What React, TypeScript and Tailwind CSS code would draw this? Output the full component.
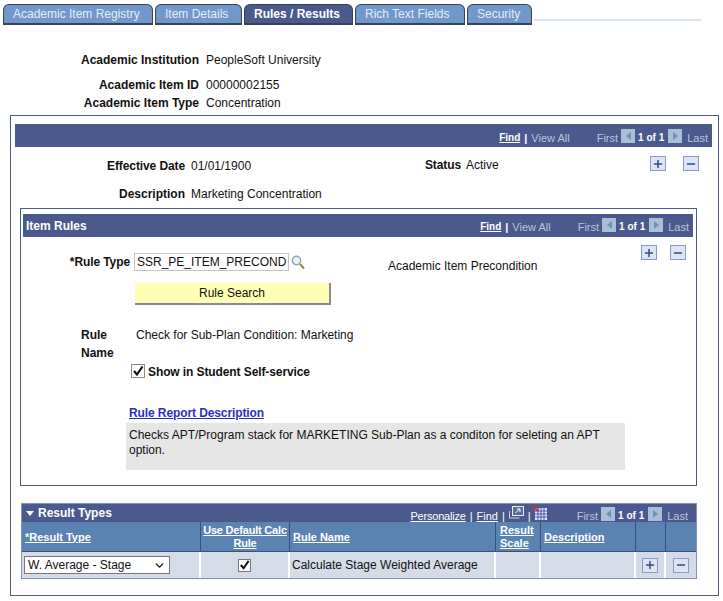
import { ChevronDown, Minus, Plus } from 'lucide-react';

const tabs = [
  { label: 'Academic Item Registry', width: 'w-[150px]' },
  { label: 'Item Details', width: 'w-[87px]' },
  { label: 'Rules / Results', width: 'w-[109px]', active: true },
  { label: 'Rich Text Fields', width: 'w-[110px]' },
  { label: 'Security', width: 'w-[65px]' },
];

const IconBtn = ({ minus }: { minus?: boolean }) => (
  <span className="flex h-[15px] w-[16px] items-center justify-center border border-[#8c9bc4] bg-[#dbe5f5] text-[#2f4a86]">
    {minus ? <Minus size={12} strokeWidth={3} /> : <Plus size={12} strokeWidth={3} />}
  </span>
);

const Arrow = ({ right }: { right?: boolean }) => (
  <span className="flex h-[14px] w-[14px] items-center justify-center bg-[#a9bfd6]">
    <span
      className={
        right
          ? 'h-0 w-0 border-y-[4px] border-l-[5px] border-y-transparent border-l-[#6f93b5]'
          : 'h-0 w-0 border-y-[4px] border-r-[5px] border-y-transparent border-r-[#6f93b5]'
      }
    />
  </span>
);

const Pager = () => (
  <div className="flex items-center text-[11px] text-[#b9c4da]">
    <span>First</span>
    <span className="ml-[3px] -translate-y-[2px]">
      <Arrow />
    </span>
    <span className="ml-[3px] text-[10px] font-bold text-white">1 of 1</span>
    <span className="ml-[4px] -translate-y-[2px]">
      <Arrow right />
    </span>
    <span className="ml-[5px]">Last</span>
  </div>
);

const CheckMark = () => (
  <svg width="12" height="12" viewBox="0 0 12 12">
    <path d="M2 6l3 3.5L10.5 1.5" stroke="#111" strokeWidth="2.2" fill="none" />
  </svg>
);

const GridIcon = () => (
  <svg width="14" height="14" viewBox="0 0 14 14" className="-translate-y-[3px]">
    <rect x="2" y="2" width="12" height="12" fill="#e4e8f6" />
    <path d="M2 5h12M2 8h12M2 11h12M5 2v12M8 2v12M11 2v12" stroke="#4a55b5" strokeWidth="1" />
    <path d="M0 0l5 5" stroke="#e0262b" strokeWidth="1.8" />
    <path d="M2 5h3.5V1.5z" fill="#e0262b" />
  </svg>
);

const ZoomIcon = () => (
  <svg width="16" height="14" viewBox="0 0 16 14" className="-translate-y-[3px]">
    <rect x="3.5" y="0.5" width="11" height="9" fill="#5d6d97" stroke="#e8edf5" />
    <path d="M6.5 7l4-4M8 3h3v3" stroke="#fff" fill="none" />
    <path d="M0.5 5v7h10" stroke="#c8d2e4" fill="none" />
  </svg>
);

const LookupIcon = () => (
  <svg width="14" height="15" viewBox="0 0 14 15" className="mt-[2px] ml-[2px]">
    <circle cx="5.5" cy="5.5" r="4.2" fill="#eaf2f8" stroke="#8fa3b4" strokeWidth="1.4" />
    <path d="M9 9l4 4.5" stroke="#8f9440" strokeWidth="2.2" />
  </svg>
);

const App = () => {
  return (
    <div className="h-[601px] w-[723px] overflow-hidden bg-white font-['Liberation_Sans',Arial,sans-serif] text-[12px] leading-[14px] text-[#111]">
      {/* Tabs */}
      <div className="flex h-[25px] pt-[4px] pl-[3px]">
        <div className="flex gap-[2px]">
          {tabs.map((tab) => (
            <div
              key={tab.label}
              className={`flex h-[21px] items-center rounded-t-[6px] border border-b-2 border-[#39424f] pl-[9px] ${tab.width} ${
                tab.active ? 'bg-[#4b5a8c] text-white' : 'bg-[#7098ca] text-[#e6edf5]'
              }`}
            >
              <span className={tab.active ? 'font-bold' : 'font-normal'}>{tab.label}</span>
            </div>
          ))}
        </div>
        <div className="mt-[15px] ml-[2px] h-[2px] w-[167px] bg-[#d6e4f5]" />
      </div>

      {/* Item key fields */}
      <div className="mt-[27px] ml-[80px]">
        <div className="flex h-[16px] items-center gap-[7px]">
          <span className="w-[119px] text-right font-bold">Academic Institution</span>
          <span>PeopleSoft University</span>
        </div>
        <div className="mt-[9px] flex h-[16px] items-center gap-[7px]">
          <span className="w-[119px] text-right font-bold">Academic Item ID</span>
          <span>00000002155</span>
        </div>
        <div className="mt-[2px] flex h-[16px] items-center gap-[7px]">
          <span className="w-[119px] text-right font-bold">Academic Item Type</span>
          <span>Concentration</span>
        </div>
      </div>

      {/* Effective dated panel */}
      <div className="mt-[4px] ml-[10px] h-[481px] w-[709px] border border-[#4b5a8c] pt-[8px] pl-[4px]">
        <div className="flex h-[23px] w-[697px] items-end justify-end bg-[#4b5a8c] pr-[4px] pb-[2px] text-[11px] text-[#b9c4da]">
          <span className="text-[10px] font-bold text-white underline">Find</span>
          <span className="mx-[4px] font-bold text-white">|</span>
          <span>View All</span>
          <span className="w-[27px]" />
          <Pager />
        </div>
        <div className="flex h-[61px] pt-[9px]">
          <div className="w-[170px]">
            <div className="mt-[3px] text-right font-bold tracking-[-0.1px]">Effective Date</div>
            <div className="mt-[14px] text-right font-bold">Description</div>
          </div>
          <div className="ml-[6px] w-[170px]">
            <div className="mt-[3px]">01/01/1900</div>
            <div className="mt-[14px] whitespace-nowrap">Marketing Concentration</div>
          </div>
          <div className="mt-[2px] w-[100px] text-right font-bold tracking-[-0.1px]">Status</div>
          <div className="mt-[2px] ml-[5px] w-[184px]">Active</div>
          <IconBtn />
          <span className="w-[17px]" />
          <IconBtn minus />
        </div>

        {/* Item Rules */}
        <div className="ml-[5px] h-[278px] w-[677px] border border-[#4b5a8c] pt-[5px] pl-[2px]">
          <div className="flex h-[23px] w-[670px] items-center justify-between bg-[#4b5a8c] pr-[4px] pl-[3px]">
            <span className="font-bold text-white">Item Rules</span>
            <div className="flex items-end pt-[3px] text-[11px] text-[#b9c4da]">
              <span className="text-[10px] font-bold text-white underline">Find</span>
              <span className="mx-[4px] font-bold text-white">|</span>
              <span>View All</span>
              <span className="w-[27px]" />
              <Pager />
            </div>
          </div>

          <div className="relative flex h-[46px] pt-[16px]">
            <div className="w-[107px] pt-[2px] text-right font-bold tracking-[-0.1px]">*Rule Type</div>
            <div className="ml-[4px] flex h-[18px] w-[155px] items-center border border-[#c4c4c4] pl-[2px] text-[12px] whitespace-nowrap">
              SSR_PE_ITEM_PRECOND
            </div>
            <LookupIcon />
            <div className="ml-[83px] pt-[6px]">Academic Item Precondition</div>
            <div className="absolute top-[8px] left-[618px] flex gap-[13px]">
              <IconBtn />
              <IconBtn minus />
            </div>
          </div>

          <div className="ml-[112px] flex h-[22px] w-[196px] items-center justify-center border-r-2 border-b-2 border-[#8a8a8a] bg-[#ffffb5]">
            Rule Search
          </div>

          <div className="mt-[21px] flex">
            <div className="ml-[58px] w-[55px] leading-[18px] font-bold">
              Rule
              <br />
              Name
            </div>
            <div className="pt-[2px]">Check for Sub-Plan Condition: Marketing</div>
          </div>

          <div className="mt-[2px] ml-[108px] flex items-center gap-[3px]">
            <span className="flex h-[14px] w-[14px] items-center justify-center border border-[#8a8a8a] bg-white">
              <CheckMark />
            </span>
            <span className="translate-y-[1px] font-bold tracking-[-0.1px]">Show in Student Self-service</span>
          </div>

          <div className="mt-[28px] ml-[106px] font-bold tracking-[-0.1px] text-[#2d2fc0] underline">Rule Report Description</div>
          <div className="mt-[3px] ml-[103px] h-[47px] w-[499px] bg-[#e6e6e6] px-[3px] pt-[5px] leading-[15px]">
            Checks APT/Program stack for MARKETING Sub-Plan as a conditon for seleting an APT option.
          </div>
        </div>

        {/* Result Types grid */}
        <div className="mt-[17px] ml-[6px] w-[676px] border border-[#8391b8] text-[#111]">
          <div className="flex h-[18px] items-center justify-between bg-[#4b5a8c] pr-[8px] pl-[4px] text-[11px]">
            <div className="flex items-center gap-[4px] text-[12px] font-bold text-white">
              <span className="h-0 w-0 border-x-[4px] border-t-[5px] border-x-transparent border-t-white" />
              Result Types
            </div>
            <div className="flex translate-y-[1px] items-end pt-[3px] text-[#b9c4da]">
              <span className="tracking-[-0.2px] text-white underline">Personalize</span>
              <span className="mx-[4px] text-white">|</span>
              <span className="text-white underline">Find</span>
              <span className="mx-[4px] text-white">|</span>
              <ZoomIcon />
              <span className="mr-[2px] ml-[3px] text-white">|</span>
              <GridIcon />
              <span className="w-[30px]" />
              <Pager />
            </div>
          </div>
          <div className="grid grid-cols-[179px_89px_206px_45px_95px_30px_30px] text-[11px] font-bold text-white">
            <div className="flex h-[30px] items-center border-r border-b border-[#3d4f7c] bg-[#5b83b2] pl-[3px] underline">*Result Type</div>
            <div className="flex h-[30px] items-center justify-center border-r border-b border-[#3d4f7c] bg-[#5b83b2] text-center leading-[13px] tracking-[-0.2px] underline">Use Default Calc Rule</div>
            <div className="flex h-[30px] items-center border-r border-b border-[#3d4f7c] bg-[#5b83b2] pl-[3px] underline">Rule Name</div>
            <div className="flex h-[30px] items-center border-r border-b border-[#3d4f7c] bg-[#5b83b2] pl-[4px] leading-[13px] underline">Result Scale</div>
            <div className="flex h-[30px] items-center border-r border-b border-[#3d4f7c] bg-[#5b83b2] pl-[3px] underline">Description</div>
            <div className="h-[30px] border-r border-b border-[#3d4f7c] bg-[#5b83b2]" />
            <div className="h-[30px] border-b border-[#3d4f7c] bg-[#5b83b2]" />
          </div>
          <div className="grid h-[26px] grid-cols-[179px_89px_206px_45px_95px_30px_30px] bg-[#d5dce8]">
            <div className="flex items-center border-r-2 border-white pl-[2px]">
              <div className="flex h-[18px] w-[146px] items-center justify-between border border-[#777] bg-white pr-[3px] pl-[3px]">
                W. Average - Stage
                <ChevronDown size={13} strokeWidth={2.5} />
              </div>
            </div>
            <div className="flex items-center justify-center border-r-2 border-white">
              <span className="flex h-[13px] w-[13px] items-center justify-center border border-[#777] bg-white">
                <CheckMark />
              </span>
            </div>
            <div className="flex items-center border-r-2 border-white pl-[2px]">Calculate Stage Weighted Average</div>
            <div className="border-r-2 border-white" />
            <div className="border-r-2 border-white" />
            <div className="flex items-center justify-center border-r-2 border-white"><IconBtn /></div>
            <div className="flex items-center justify-center"><IconBtn minus /></div>
          </div>
        </div>
      </div>
    </div>
  );
};

export default App;
